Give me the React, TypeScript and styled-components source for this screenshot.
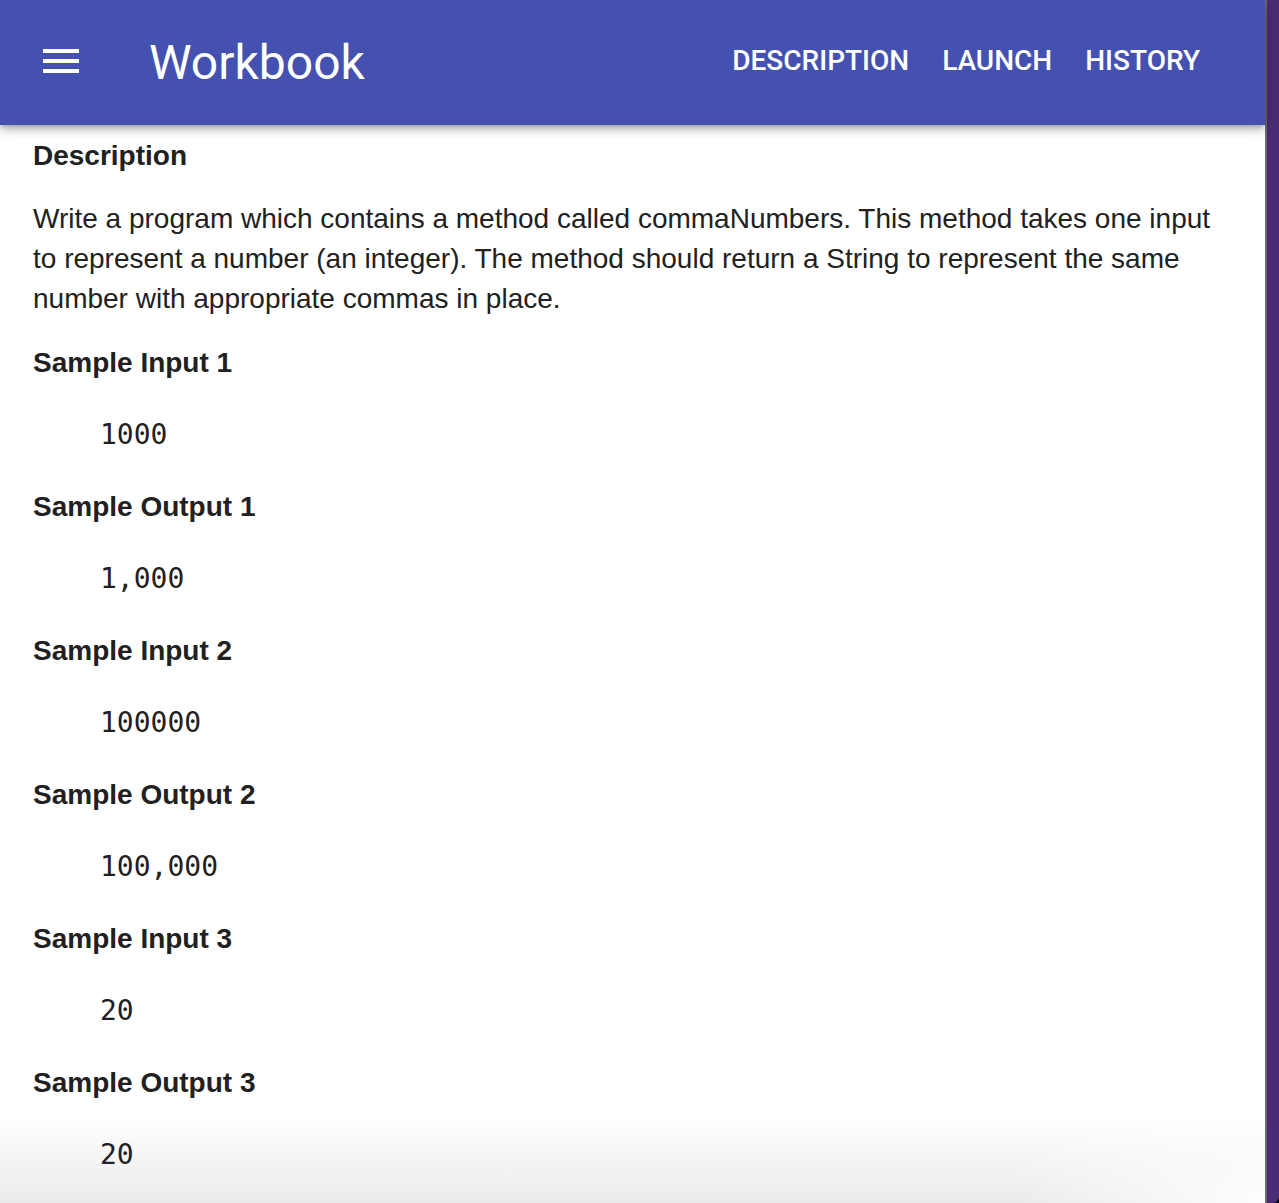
import React from "react";
import styled, { createGlobalStyle } from "styled-components";

const GlobalStyle = createGlobalStyle`
  html, body {
    margin: 0;
    padding: 0;
    background: #000;
  }
  body {
    font-family: "Liberation Sans", Arial, sans-serif;
  }
`;

const Screen = styled.div`
  display: flex;
  width: 1279px;
  height: 1203px;
  overflow: hidden;
`;

const Page = styled.div`
  width: 1265px;
  flex: none;
  display: flex;
  flex-direction: column;
  border-right: 2px solid #6a6a6a;
  background:
    radial-gradient(ellipse 260px 110px at 100% 100%, rgba(255, 255, 255, 0.95), rgba(255, 255, 255, 0) 100%),
    linear-gradient(to bottom, #ffffff 0, #ffffff calc(100% - 85px), #eaeaea 100%);
`;

const Side = styled.div`
  flex: 1;
  background: #4b2c74;
  border-bottom-right-radius: 6px;
`;

const AppBar = styled.header`
  position: relative;
  z-index: 2;
  height: 125px;
  flex: none;
  display: flex;
  align-items: center;
  padding: 0 65px 0 43px;
  background: #4551b0;
  color: #fff;
  box-shadow: 0 3px 4px -1px rgba(0, 0, 0, 0.2), 0 6px 8px 0 rgba(0, 0, 0, 0.14),
    0 2px 14px 0 rgba(0, 0, 0, 0.12);
`;

const MenuButton = styled.button`
  width: 36px;
  height: 24px;
  padding: 0;
  border: 0;
  background: transparent;
  display: flex;
  flex-direction: column;
  justify-content: space-between;
  cursor: pointer;
  margin-bottom: 3px;
`;

const MenuBar = styled.span`
  display: block;
  height: 4px;
  width: 36px;
  background: #fff;
`;

const Title = styled.h1`
  margin: 0 0 0 70px;
  font-family: Roboto, "Liberation Sans", sans-serif;
  font-weight: 400;
  font-size: 48px;
  line-height: 1;
  flex: 1;
`;

const Nav = styled.nav`
  display: flex;
  gap: 33px;
  margin-bottom: 4px;
`;

const NavLink = styled.a`
  font-family: Roboto, "Liberation Sans", sans-serif;
  font-weight: 500;
  font-size: 28px;
  line-height: 1;
  color: #fff;
  text-transform: uppercase;
  text-decoration: none;
  cursor: pointer;
`;

const Content = styled.main`
  flex: 1;
  padding: 11px 33px 0 33px;
  color: #212121;
`;

const Heading = styled.h2`
  margin: 0;
  font-family: "Liberation Sans", Arial, sans-serif;
  font-weight: 700;
  font-size: 28px;
  line-height: 40px;
`;

const Paragraph = styled.p`
  margin: 23px 0 24px;
  font-family: "Liberation Sans", Arial, sans-serif;
  font-size: 28px;
  line-height: 40px;
`;

const Code = styled.pre`
  margin: 32px 0 32px 67px;
  font-family: "DejaVu Sans Mono", "Liberation Mono", monospace;
  font-size: 28px;
  line-height: 40px;
`;

const samples = [
  { label: "Sample Input 1", value: "1000" },
  { label: "Sample Output 1", value: "1,000" },
  { label: "Sample Input 2", value: "100000" },
  { label: "Sample Output 2", value: "100,000" },
  { label: "Sample Input 3", value: "20" },
  { label: "Sample Output 3", value: "20" },
];

export default function App() {
  return (
    <>
      <GlobalStyle />
      <Screen>
        <Page>
          <AppBar>
            <MenuButton aria-label="menu">
              <MenuBar />
              <MenuBar />
              <MenuBar />
            </MenuButton>
            <Title>Workbook</Title>
            <Nav>
              <NavLink>Description</NavLink>
              <NavLink>Launch</NavLink>
              <NavLink>History</NavLink>
            </Nav>
          </AppBar>
          <Content>
            <Heading>Description</Heading>
            <Paragraph>
              Write a program which contains a method called commaNumbers. This method takes one input
              to represent a number (an integer). The method should return a String to represent the same
              number with appropriate commas in place.
            </Paragraph>
            {samples.map((s) => (
              <React.Fragment key={s.label}>
                <Heading>{s.label}</Heading>
                <Code>{s.value}</Code>
              </React.Fragment>
            ))}
          </Content>
        </Page>
        <Side />
      </Screen>
    </>
  );
}
